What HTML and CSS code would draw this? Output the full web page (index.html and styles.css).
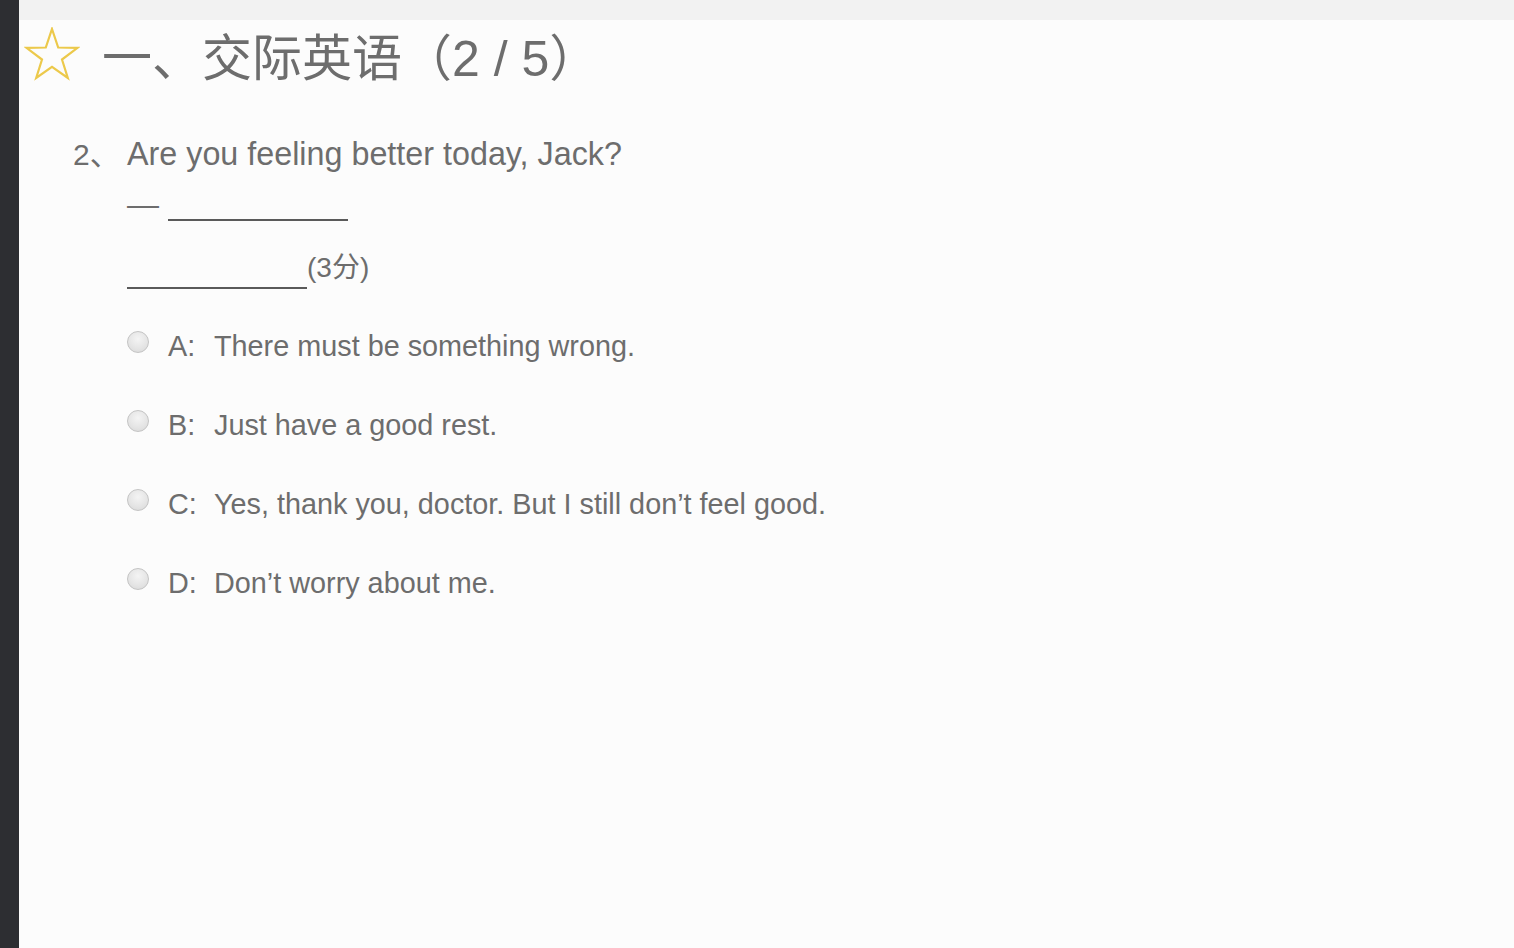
FILE: index.html
```html
<!DOCTYPE html>
<html lang="zh">
<head>
<meta charset="utf-8">
<title>交际英语</title>
<link rel="stylesheet" href="styles.css">
</head>
<body>
<div class="app">
  <div class="sidebar"></div>
  <div class="main">
    <div class="topstrip"></div>
    <div class="title">
      <svg class="star" viewBox="0 0 56 54" width="56" height="54">
        <polygon points="28,2 34.2,20.5 53.5,20.8 38,32.5 43.8,51 28,39.8 12.2,51 18,32.5 2.5,20.8 21.8,20.5" fill="none" stroke="#ecc94b" stroke-width="2.2" stroke-linejoin="miter"/>
      </svg>
      <h1 class="title-text">一、交际英语（2 / 5）</h1>
    </div>
    <div class="question">
      <div class="q-line">
        <span class="q-num">2、</span>
        <span class="q-text">Are you feeling better today, Jack?</span>
      </div>
      <div class="blank-line first">
        <span class="dash">—</span>
        <span class="blank blank-a"></span>
      </div>
      <div class="blank-line second">
        <span class="blank blank-b"></span>
        <span class="score">(3分)</span>
      </div>
      <ul class="options">
        <li class="option"><span class="radio"></span><span class="opt-key">A:</span><span class="opt-text">There must be something wrong.</span></li>
        <li class="option"><span class="radio"></span><span class="opt-key">B:</span><span class="opt-text">Just have a good rest.</span></li>
        <li class="option"><span class="radio"></span><span class="opt-key">C:</span><span class="opt-text">Yes, thank you, doctor. But I still don’t feel good.</span></li>
        <li class="option"><span class="radio"></span><span class="opt-key">D:</span><span class="opt-text">Don’t worry about me.</span></li>
      </ul>
    </div>
  </div>
</div>
</body>
</html>
```

FILE: styles.css
```css
html, body {
  margin: 0;
  padding: 0;
  height: 100%;
}
body {
  background: #fcfcfc;
  font-family: "Liberation Sans", Arial, "Noto Sans CJK SC", sans-serif;
  color: #6d6d6d;
  overflow: hidden;
}
.app {
  display: flex;
  width: 1514px;
  height: 948px;
}
.sidebar {
  width: 19px;
  flex: none;
  background: #2d2e32;
}
.main {
  flex: 1;
  display: flex;
  flex-direction: column;
}
.topstrip {
  height: 20px;
  background: #f2f2f2;
}
.title {
  display: flex;
  align-items: center;
  padding-left: 5px;
  height: 78px;
}
.star {
  display: block;
  flex: none;
  margin-top: -11px;
}
.title-text {
  margin: 0 0 0 22px;
  font-weight: normal;
  font-size: 50px;
  line-height: 60px;
  color: #6d6d6d;
  font-family: "Liberation Sans", Arial, "Noto Sans CJK SC", sans-serif;
}
.question {
  padding-left: 54px;
  padding-top: 36px;
}
.q-line {
  display: flex;
  align-items: baseline;
  font-size: 32.3px;
  line-height: 40px;
}
.q-num {
  width: 54px;
  flex: none;
  font-size: 30px;
}
.blank-line {
  display: flex;
  align-items: flex-end;
  padding-left: 54px;
}
.blank-line.first {
  margin-top: 16px;
  height: 30px;
}
.dash {
  font-size: 32px;
  line-height: 30px;
  width: 41px;
  margin-bottom: 2px;
}
.blank {
  display: block;
  height: 0;
  border-bottom: 2px solid #5a5a5a;
}
.blank-a {
  width: 180px;
}
.blank-line.second {
  margin-top: 36px;
  height: 32px;
}
.blank-b {
  width: 180px;
}
.score {
  font-size: 28px;
  line-height: 30px;
  margin-bottom: 6px;
}
.options {
  list-style: none;
  margin: 39px 0 0 54px;
  padding: 0;
  display: flex;
  flex-direction: column;
  gap: 43px;
}
.option {
  display: flex;
  align-items: center;
  height: 36px;
  font-size: 28.8px;
}
.radio {
  width: 22px;
  height: 22px;
  flex: none;
  border-radius: 50%;
  box-sizing: border-box;
  border: 1px solid #c4c4c4;
  background: radial-gradient(circle at 50% 35%, #f4f4f4 0%, #e4e4e4 60%, #d6d6d6 100%);
  margin-right: 19px;
  margin-top: -8px;
}
.opt-key {
  width: 46px;
  flex: none;
}
```
